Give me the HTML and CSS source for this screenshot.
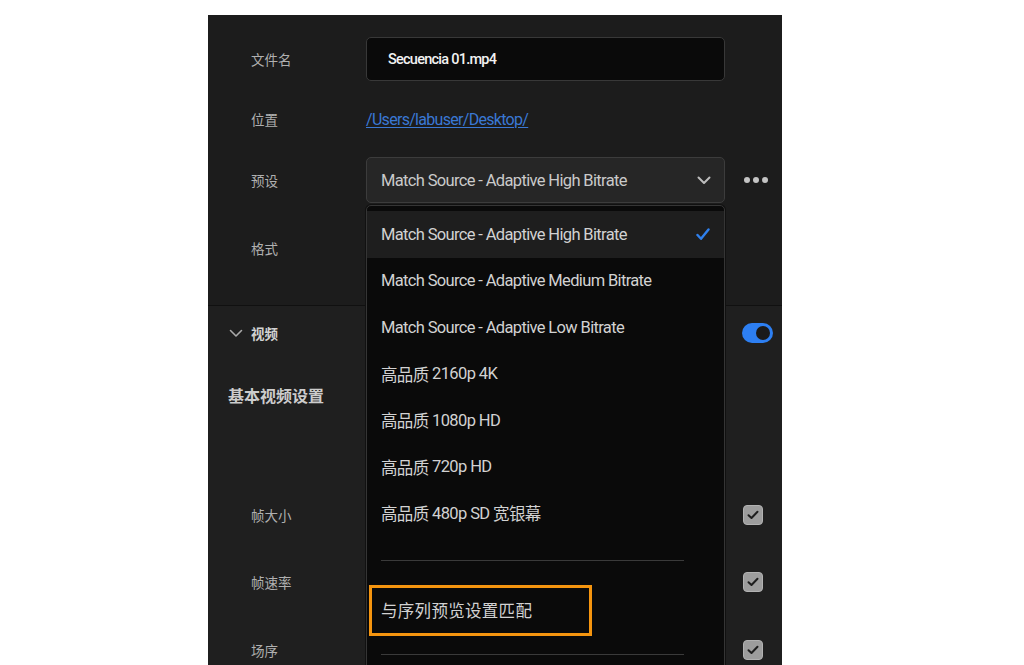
FILE: index.html
```html
<!DOCTYPE html>
<html lang="zh-CN">
<head>
<meta charset="utf-8">
<title>导出设置</title>
<link rel="stylesheet" href="styles.css">
</head>
<body>
<div class="panel">
  <section class="general">
    <div class="row row-file">
      <span class="label">文件名</span>
      <div class="field input"><span>Secuencia 01.mp4</span></div>
    </div>
    <div class="row row-loc">
      <span class="label">位置</span>
      <a class="path" href="#">/Users/labuser/Desktop/</a>
    </div>
    <div class="row row-preset">
      <span class="label">预设</span>
      <div class="field select">
        <span>Match Source - Adaptive High Bitrate</span>
        <svg class="chev" width="14" height="9" viewBox="0 0 14 9"><path d="M1.5 1.5 L7 7 L12.5 1.5" fill="none" stroke="#bdbdbd" stroke-width="2" stroke-linecap="round" stroke-linejoin="round"/></svg>
      </div>
      <span class="more"><i></i><i></i><i></i></span>
    </div>
    <div class="row row-format">
      <span class="label">格式</span>
    </div>
  </section>

  <section class="video">
    <div class="vhead">
      <svg class="vchev" width="14" height="9" viewBox="0 0 14 9"><path d="M1.5 1.5 L7 7 L12.5 1.5" fill="none" stroke="#a9a9a9" stroke-width="1.6" stroke-linecap="round" stroke-linejoin="round"/></svg>
      <span class="vtitle">视频</span>
      <span class="toggle"><span class="knob"></span></span>
    </div>
    <div class="subhead">基本视频设置</div>
    <div class="setting first">
      <span class="label">帧大小</span>
      <span class="checkbox"><svg width="12" height="10" viewBox="0 0 12 10"><path d="M1.5 5.2 L4.5 8 L10.5 1.8" fill="none" stroke="#1e1e1e" stroke-width="2" stroke-linecap="round" stroke-linejoin="round"/></svg></span>
    </div>
    <div class="setting">
      <span class="label">帧速率</span>
      <span class="checkbox"><svg width="12" height="10" viewBox="0 0 12 10"><path d="M1.5 5.2 L4.5 8 L10.5 1.8" fill="none" stroke="#1e1e1e" stroke-width="2" stroke-linecap="round" stroke-linejoin="round"/></svg></span>
    </div>
    <div class="setting">
      <span class="label">场序</span>
      <span class="checkbox"><svg width="12" height="10" viewBox="0 0 12 10"><path d="M1.5 5.2 L4.5 8 L10.5 1.8" fill="none" stroke="#1e1e1e" stroke-width="2" stroke-linecap="round" stroke-linejoin="round"/></svg></span>
    </div>
  </section>

  <!-- preset dropdown, open over the form -->
  <div class="menu">
    <div class="item selected">
      <span>Match Source - Adaptive High Bitrate</span>
      <svg class="tick" width="14" height="13" viewBox="0 0 14 13"><path d="M1.5 7 L5 10.8 L12.5 1.5" fill="none" stroke="#2f80ed" stroke-width="2.4" stroke-linecap="round" stroke-linejoin="round"/></svg>
    </div>
    <div class="item">Match Source - Adaptive Medium Bitrate</div>
    <div class="item">Match Source - Adaptive Low Bitrate</div>
    <div class="item">高品质 <span class="lat">2160p 4K</span></div>
    <div class="item">高品质 <span class="lat">1080p HD</span></div>
    <div class="item">高品质 <span class="lat">720p HD</span></div>
    <div class="item">高品质 <span class="lat">480p SD</span> 宽银幕</div>
    <div class="sep"></div>
    <div class="item focus">与序列预览设置匹配</div>
    <div class="sep sep2"></div>
  </div>
</div>
</body>
</html>
```

FILE: styles.css
```css
html, body {
  margin: 0;
  padding: 0;
  background: #ffffff;
}

body {
  font-family: Roboto, "Noto Sans CJK SC", sans-serif;
}

.panel {
  position: relative;
  margin: 15px 0 0 208px;
  width: 574px;
  height: 650px;
  overflow: hidden;
  background: #1f1f1f;
}

/* ---------- general section ---------- */
.general {
  background: #1c1c1c;
  padding: 22px 0 12px;
  border-bottom: 1px solid #101010;
  box-sizing: border-box;
  height: 291px;
}

.row {
  display: flex;
  align-items: center;
  padding-left: 43px;
}

.label {
  width: 115px;
  flex: none;
  color: #b0b0b0;
  font-family: "Noto Sans CJK SC", sans-serif;
  font-size: 13.5px;
}

.row-file { height: 44px; }
.row-loc { height: 76px; }
.row-preset { height: 46px; }
.row-format { height: 90px; }

.field {
  box-sizing: border-box;
  width: 359px;
  height: 100%;
  border-radius: 5px;
  display: flex;
  align-items: center;
}

.input {
  background: #0a0a0a;
  border: 1px solid #383838;
  padding-left: 21px;
  color: #f2f2f2;
  font-size: 14.5px;
  font-weight: 500;
  letter-spacing: -0.75px;
}

.path {
  color: #3a78d4;
  font-size: 16px;
  letter-spacing: -0.7px;
  text-decoration: underline;
  text-underline-offset: 2px;
}

.select {
  background: #262626;
  border: 1px solid #3c3c3c;
  padding: 0 13px 0 14px;
  color: #cacaca;
  font-size: 16.5px;
  letter-spacing: -0.65px;
  justify-content: space-between;
}

.chev { flex: none; }

.more {
  display: flex;
  gap: 3px;
  margin-left: 19px;
}

.more i {
  width: 6px;
  height: 6px;
  border-radius: 50%;
  background: #c4c4c4;
}

/* ---------- video section ---------- */
.vhead {
  height: 54px;
  display: flex;
  align-items: center;
  padding-left: 21px;
  padding-right: 9px;
}

.vchev { margin-right: 8px; }

.vtitle {
  color: #d2d2d2;
  font-family: "Noto Sans CJK SC", sans-serif;
  font-weight: 700;
  font-size: 13.5px;
}

.toggle {
  margin-left: auto;
  width: 31px;
  height: 20px;
  border-radius: 10px;
  background: #2d7ff2;
  display: flex;
  align-items: center;
  justify-content: flex-end;
  padding-right: 3px;
  box-sizing: border-box;
}

.knob {
  width: 14px;
  height: 14px;
  border-radius: 50%;
  background: #1a1a1a;
}

.subhead {
  height: 70px;
  display: flex;
  align-items: center;
  padding-left: 20px;
  color: #cccccc;
  font-family: "Noto Sans CJK SC", sans-serif;
  font-weight: 700;
  font-size: 16px;
}

.setting {
  height: 67.5px;
  display: flex;
  align-items: center;
  padding-left: 43px;
  padding-right: 19px;
}

.setting.first { margin-top: 51px; }

.checkbox {
  margin-left: auto;
  width: 20px;
  height: 20px;
  box-sizing: border-box;
  border-radius: 4px;
  background: #9d9d9d;
  border: 1px solid #b2b2b2;
  display: flex;
  align-items: center;
  justify-content: center;
}

/* ---------- dropdown menu ---------- */
.menu {
  position: absolute;
  left: 158px;
  top: 190px;
  width: 359px;
  height: 520px;
  box-sizing: border-box;
  background: #0a0a0a;
  border: 1px solid #353535;
  border-radius: 5px;
  padding-top: 5px;
  box-shadow: 0 0 0 1px #111;
}

.item {
  height: 46.5px;
  display: flex;
  align-items: center;
  justify-content: space-between;
  padding: 0 14px;
  color: #d2d2d2;
  font-size: 16.5px;
  letter-spacing: -0.65px;
  white-space: pre;
}

.item:not(.selected) { justify-content: flex-start; }

.item .lat { letter-spacing: -0.6px; }

.item.selected {
  background: #1e1e1e;
}

.sep {
  height: 1px;
  background: #3a3a3a;
  margin: 23px 40px 0 14px;
}

.item.focus {
  box-sizing: border-box;
  width: 223px;
  height: 51px;
  margin: 24px 0 0 2px;
  padding-left: 9px;
  border: 3px solid #f5950f;
  letter-spacing: 0.3px;
  font-size: 16.5px;
}

.sep2 { margin-top: 18px; }
```
